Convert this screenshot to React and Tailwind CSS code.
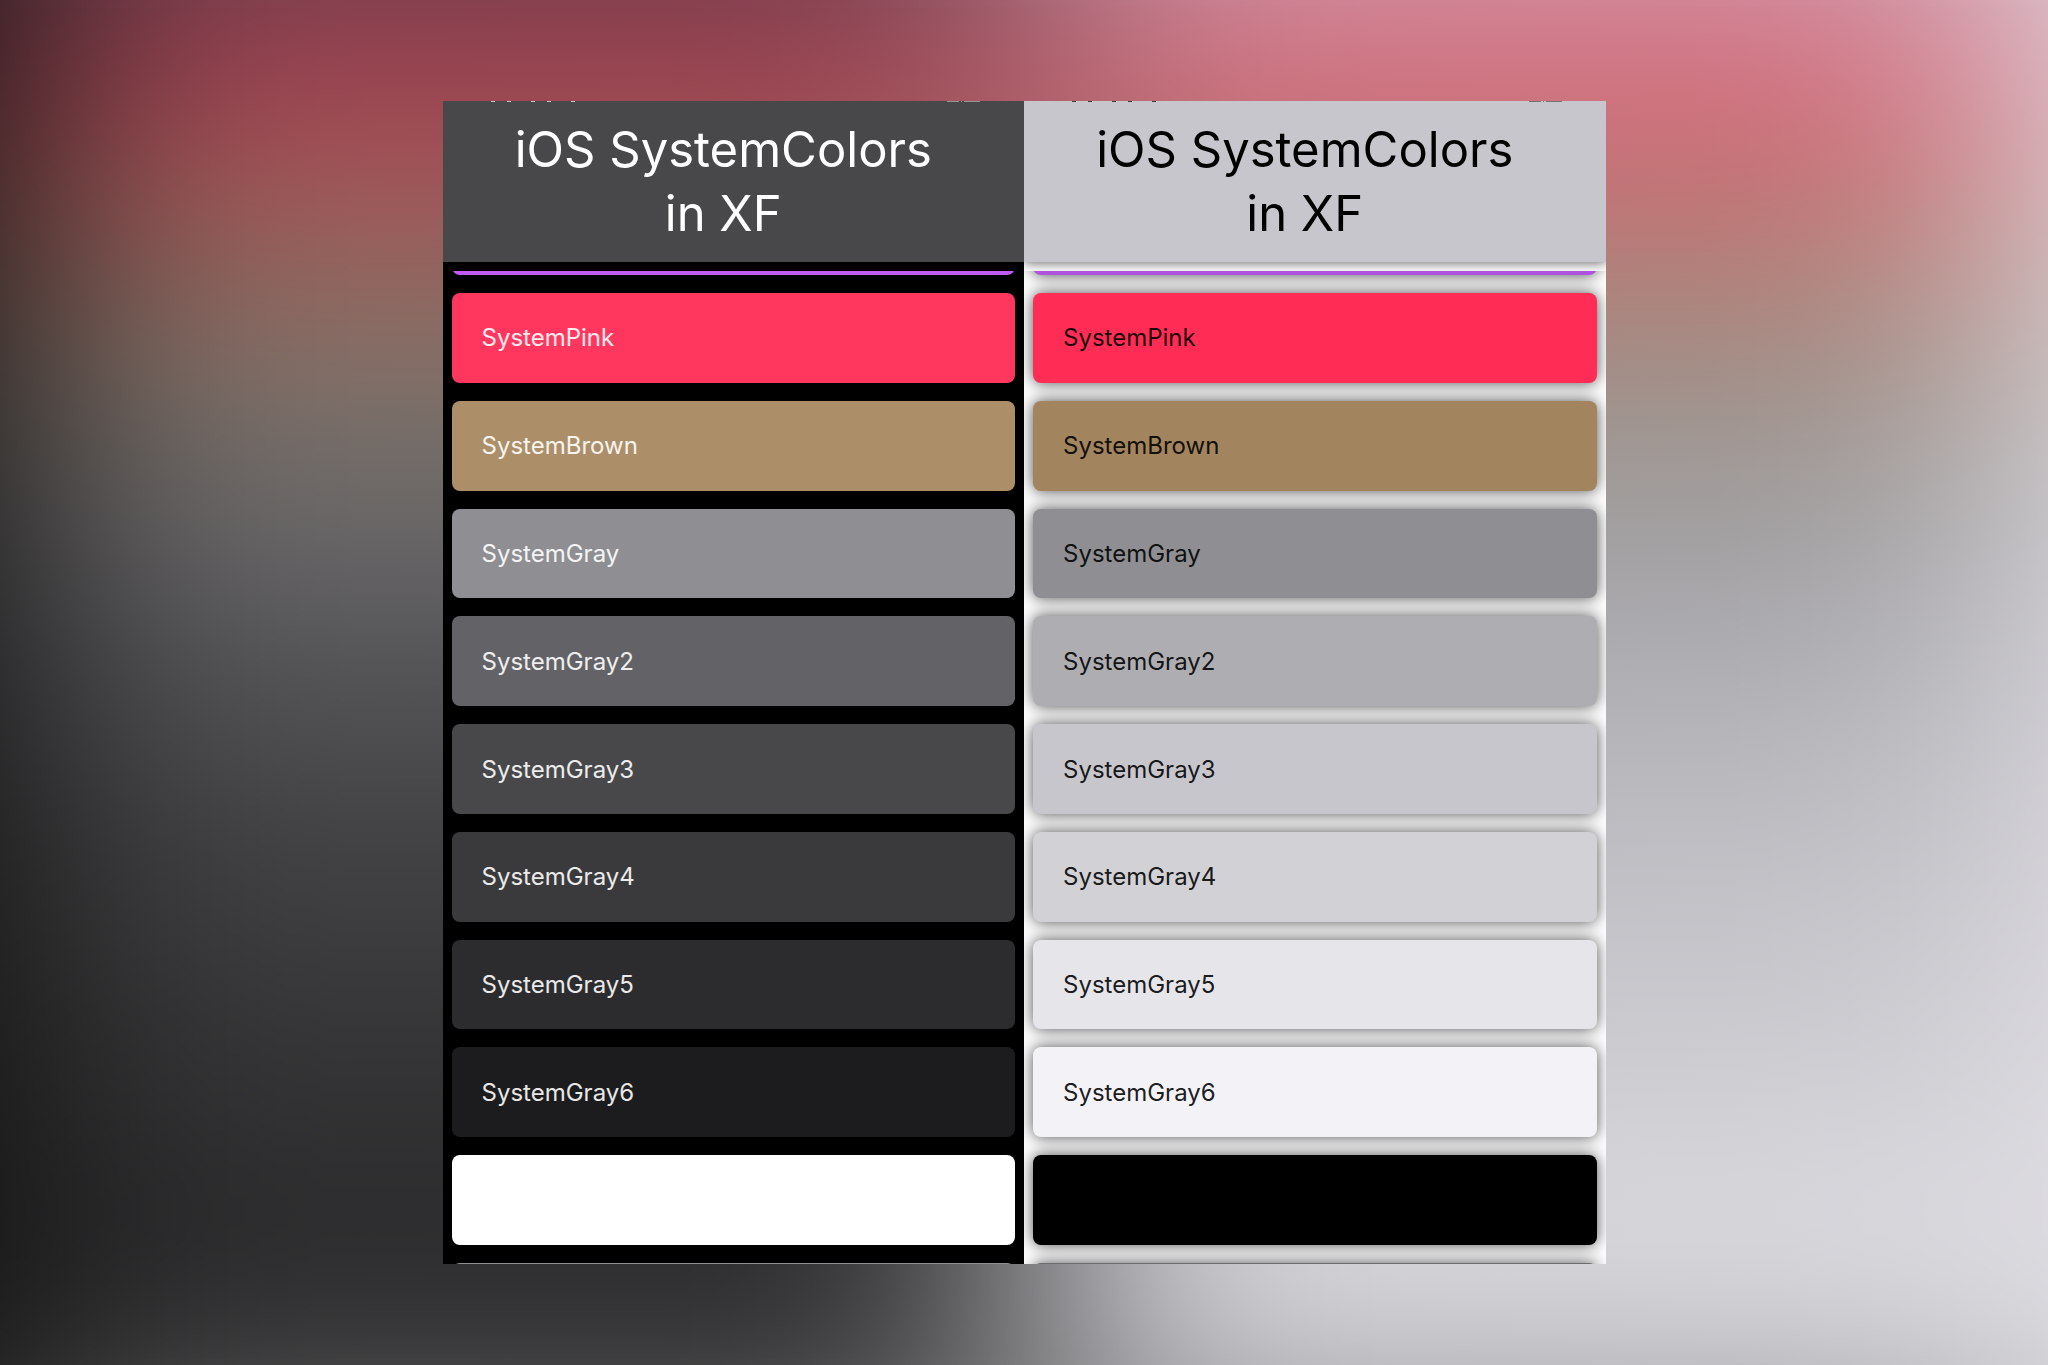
const NAMES = ["SystemPink", "SystemBrown", "SystemGray", "SystemGray2", "SystemGray3", "SystemGray4", "SystemGray5", "SystemGray6", ""];

const DARK = {
  column: "bg-black text-white",
  header: "bg-[#48484a]",
  edge: "bg-[#bf5af2]",
  next: "bg-[#8e8e93]",
  row: "",
  label: "text-white/90",
  ink: "bg-white/70",
  colors: ["bg-[#ff375f]", "bg-[#ac8e68]", "bg-[#8e8e93]", "bg-[#636267]", "bg-[#48484a]", "bg-[#3a3a3c]", "bg-[#2c2c2e]", "bg-[#1c1c1e]", "bg-white"],
};

const LIGHT = {
  column: "bg-white text-black",
  header: "bg-[#c7c6cc] shadow-[0_0_12px_rgba(0,0,0,0.7)]",
  edge: "bg-[#af52de] shadow-[0_0_16px_rgba(0,0,0,0.7)]",
  next: "bg-[#6c6c70] shadow-[0_0_16px_rgba(0,0,0,0.7)]",
  row: "shadow-[0_0_16px_rgba(0,0,0,0.7)]",
  label: "text-black/90",
  ink: "bg-black/70",
  colors: ["bg-[#ff2d55]", "bg-[#a2845e]", "bg-[#8e8e93]", "bg-[#aeaeb2]", "bg-[#c7c6cc]", "bg-[#d1d1d6]", "bg-[#e5e5ea]", "bg-[#f2f2f7]", "bg-black"],
};

function StatusBar({ theme }) {
  return (
    <div className="flex h-px justify-between pr-11 pl-12" aria-hidden="true">
      <div className="flex gap-3">
        <span className={`w-1 ${theme.ink}`} />
        <span className={`w-1 ${theme.ink}`} />
        <span className={`ml-2 w-1 ${theme.ink}`} />
        <span className={`w-1 ${theme.ink}`} />
        <span className={`ml-2 w-1 ${theme.ink}`} />
      </div>
      <div className="flex gap-0.5 opacity-60">
        <span className={`w-3 ${theme.ink}`} />
        <span className={`w-px ${theme.ink}`} />
        <span className={`w-4 ${theme.ink}`} />
      </div>
    </div>
  );
}

function Screen({ theme }) {
  return (
    <section className={`flex min-w-0 flex-col overflow-hidden ${theme.column}`}>
      <header className={`flex h-[161px] shrink-0 flex-col ${theme.header}`}>
        <StatusBar theme={theme} />
        <h1 className="mt-4 pr-5 text-center text-[49px] leading-16">
          iOS SystemColors
          <br />
          in XF
        </h1>
      </header>
      <div className="mt-[9px] flex min-h-0 flex-1 flex-col gap-[18px] overflow-hidden px-[9px]">
        <div className={`-mt-4 h-5 shrink-0 rounded-b-lg ${theme.edge}`} />
        <ul className="flex min-h-0 flex-1 flex-col gap-[18px]">
          {NAMES.map((name, i) => (
            <li key={i} className={`flex flex-1 items-center rounded-lg px-[30px] pt-px text-2xl ${theme.colors[i]} ${theme.row} ${theme.label}`}>
              {name}
            </li>
          ))}
        </ul>
        <div className={`-mb-[17px] h-[18px] shrink-0 rounded-t-lg ${theme.next}`} />
      </div>
    </section>
  );
}

function BackdropColumn({ theme, side }) {
  return (
    <div className={`flex flex-1 flex-col ${side}`}>
      <div className={`h-[14%] ${theme.header}`} />
      <div className="flex flex-1 flex-col gap-8 px-4 pt-4">
        <div className={`h-2 ${theme.edge}`} />
        {theme.colors.map((color) => (
          <div key={color} className={`flex-1 ${color} ${theme.row}`} />
        ))}
        <div className={`h-1 ${theme.next}`} />
      </div>
    </div>
  );
}

function Backdrop() {
  return (
    <div className="absolute inset-0 -z-10 flex items-center justify-center overflow-hidden bg-[#808080]" aria-hidden="true">
      <div className="flex aspect-square w-full shrink-0 blur-[144px]">
        <BackdropColumn theme={DARK} side="-ml-120 pl-120 bg-[#040404]" />
        <BackdropColumn theme={LIGHT} side="-mr-120 pr-120 bg-[#e8e6ec]" />
      </div>
      <div className="absolute inset-0 bg-linear-to-r from-[#606060]/12 to-[#808080]/6" />
    </div>
  );
}

export default function App() {
  return (
    <main className="relative isolate flex h-screen justify-center overflow-hidden py-[101px] font-['Inter',sans-serif]">
      <Backdrop />
      <div className="grid aspect-square h-full grid-cols-2">
        <Screen theme={DARK} />
        <Screen theme={LIGHT} />
      </div>
    </main>
  );
}
